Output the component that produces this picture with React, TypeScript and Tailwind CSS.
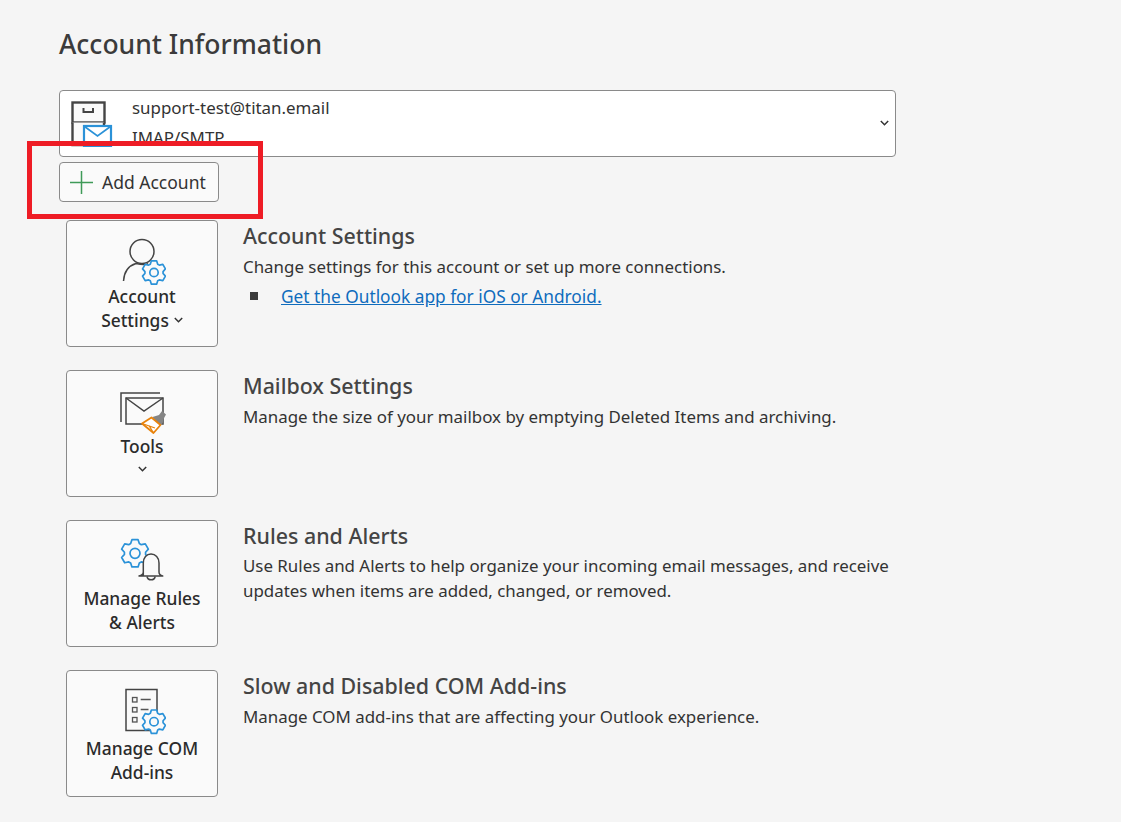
import React from "react";

const Chevron = () => (
  <svg width="9" height="6" viewBox="0 0 9 6" fill="none" stroke="#333" strokeWidth="1.5">
    <path d="M0.8 1 L4.5 4.7 L8.2 1" />
  </svg>
);

const Gear = ({ cx, cy, R = 12, hub = 4 }: { cx: number; cy: number; R?: number; hub?: number }) => {
  const r = R * 0.76;
  let d = "";
  for (let i = 0; i < 6; i++) {
    const a = (i * Math.PI) / 3 - Math.PI / 2;
    const pts: [number, number][] = [
      [r, a - 0.42],
      [R, a - 0.22],
      [R, a + 0.22],
      [r, a + 0.42],
    ];
    pts.forEach(([rad, ang], j) => {
      const x = cx + rad * Math.cos(ang);
      const y = cy + rad * Math.sin(ang);
      d += (i === 0 && j === 0 ? "M" : "L") + x.toFixed(2) + " " + y.toFixed(2) + " ";
    });
  }
  d += "Z";
  return (
    <g fill="#fafafa" stroke="#2b92d8" strokeWidth="1.7" strokeLinejoin="round">
      <path d={d} />
      <circle cx={cx} cy={cy} r={hub} />
    </g>
  );
};

const PersonIcon = () => (
  <svg width="48" height="48" viewBox="0 0 48 48" fill="none">
    <circle cx="24" cy="14.5" r="12" fill="#fafafa" stroke="#444" strokeWidth="1.5" />
    <path d="M5.5 44 C6 36 10 29 18 26.5 C24 28 28 28 30 26.5" fill="#fafafa" stroke="#444" strokeWidth="1.5" />
    <Gear cx={36} cy={35.5} hub={4.2} />
  </svg>
);

const ToolsIcon = () => (
  <svg width="48" height="48" viewBox="0 0 48 48" fill="none">
    <path d="M3 35 V6 H42" stroke="#444" strokeWidth="1.5" />
    <rect x="8" y="11" width="37" height="26" fill="#fafafa" stroke="#444" strokeWidth="1.5" />
    <path d="M8 11 L26 24 L45 11" stroke="#444" strokeWidth="1.5" />
    <path d="M34.5 30 L41 28 L44 24 L48 27.5 L45.5 32 L44 38 L40 38 Z" fill="#858585" />
    <path d="M24 36.5 L33.5 30.5 L42.5 38 L35.5 46 Z" fill="#fff" stroke="#e8830c" strokeWidth="1.8" strokeLinejoin="round" />
    <path d="M24 36.5 L37 41 M31 38.5 L35.5 46" stroke="#e8830c" strokeWidth="1.3" />
  </svg>
);

const RulesIcon = () => (
  <svg width="48" height="48" viewBox="0 0 48 48" fill="none">
    <Gear cx={17} cy={16.3} R={14} hub={5} />
    <path
      d="M25.3 39 V26 C25.3 20.5 28.5 17 33 17 C37.5 17 41 20.5 41 26 V35 C41 37 42.5 38.5 44.7 39 H21 C23.5 38.5 25.3 37 25.3 35 Z"
      fill="#fafafa"
      stroke="#444"
      strokeWidth="1.5"
      strokeLinejoin="round"
    />
    <path d="M29 39.5 A4.2 4.2 0 0 0 37.2 39.5" stroke="#444" strokeWidth="1.5" />
  </svg>
);

const AddinsIcon = () => (
  <svg width="48" height="48" viewBox="0 0 48 48" fill="none">
    <rect x="8" y="2.5" width="31" height="41" fill="#fafafa" stroke="#444" strokeWidth="1.5" />
    <g stroke="#555" strokeWidth="1.3">
      <rect x="14.5" y="10.5" width="4.5" height="4.5" />
      <rect x="14.5" y="20.5" width="4.5" height="4.5" />
      <rect x="14.5" y="30.5" width="4.5" height="4.5" />
      <path d="M22.7 12.5 H32.7 M22.7 22.5 H30.5" />
    </g>
    <Gear cx={36} cy={34.7} hub={4.2} />
  </svg>
);

const MailboxIcon = () => (
  <svg width="42" height="46" viewBox="0 0 42 46" fill="none">
    <rect x="1.5" y="1.5" width="32" height="20" fill="#fafafa" stroke="#444" strokeWidth="2.4" />
    <path d="M1.5 21.5 V44 H33 V21.5" fill="#fafafa" stroke="#444" strokeWidth="2.4" />
    <path d="M12.5 7 V11 H22 V7" stroke="#444" strokeWidth="2" />
    <rect x="13" y="25" width="27" height="20" fill="#fff" stroke="#2b92d8" strokeWidth="2.2" />
    <path d="M13.5 25.5 L26.5 35 L39.5 25.5" stroke="#2b92d8" strokeWidth="1.7" />
  </svg>
);

type Row = {
  icon: React.ReactNode;
  label: React.ReactNode;
  labelClass: string;
  title: string;
  body: React.ReactNode;
};

const rows: Row[] = [
  {
    icon: <PersonIcon />,
    labelClass: "-mt-[1px]",
    label: (
      <>
        Account
        <br />
        <span className="inline-flex items-center gap-[5px]">
          Settings <Chevron />
        </span>
      </>
    ),
    title: "Account Settings",
    body: (
      <>
        <p className="leading-[24px]">Change settings for this account or set up more connections.</p>
        <div className="mt-[6px] flex items-center">
          <span className="mb-[2px] ml-[7px] h-[8px] w-[8px] bg-[#3a3a3a]" />
          <a className="ml-[23px] text-[17.3px] leading-[24px] text-[#0f6cbd] underline" href="#">
            Get the Outlook app for iOS or Android.
          </a>
        </div>
      </>
    ),
  },
  {
    icon: <ToolsIcon />,
    labelClass: "-mt-[1px]",
    label: (
      <>
        Tools
        <div className="flex h-[22px] items-center justify-center">
          <Chevron />
        </div>
      </>
    ),
    title: "Mailbox Settings",
    body: <p className="leading-[24px]">Manage the size of your mailbox by emptying Deleted Items and archiving.</p>,
  },
  {
    icon: <RulesIcon />,
    labelClass: "mt-[1px]",
    label: (
      <>
        Manage Rules
        <br />& Alerts
      </>
    ),
    title: "Rules and Alerts",
    body: (
      <p className="-mt-[2px] leading-[25px]">
        Use Rules and Alerts to help organize your incoming email messages, and receive
        <br />
        updates when items are added, changed, or removed.
      </p>
    ),
  },
  {
    icon: <AddinsIcon />,
    labelClass: "mt-[1px]",
    label: (
      <>
        Manage COM
        <br />
        Add-ins
      </>
    ),
    title: "Slow and Disabled COM Add-ins",
    body: <p className="leading-[24px]">Manage COM add-ins that are affecting your Outlook experience.</p>,
  },
];

export default function App() {
  return (
    <div className="relative h-[822px] w-[1121px] overflow-hidden bg-[#f5f5f5] font-['Noto_Sans','Open_Sans',sans-serif] text-[#3a3a3a]">
      <div className="pl-[59px] pt-[26px]">
        <h1 className="text-[26.5px] font-medium leading-[36px] text-[#3b3b3b]">Account Information</h1>
        <div className="mt-[28px] flex h-[67px] w-[837px] items-start overflow-hidden rounded-[4px] border border-[#8a8a8a] bg-white pl-[11px]">
          <div className="mt-[10px] shrink-0">
            <MailboxIcon />
          </div>
          <div className="ml-[19px] mt-[2px] flex-1 text-[16.9px] leading-[30px] text-[#333]">
            <div>support-test@titan.email</div>
            <div>IMAP/SMTP</div>
          </div>
          <div className="mr-[6px] mt-[29px]">
            <Chevron />
          </div>
        </div>
        <button className="mt-[5px] flex h-[40px] w-[160px] items-center rounded-[4px] border border-[#8a8a8a] bg-[#fafafa] pl-[10px] text-[17.5px] text-[#333]">
          <svg width="23" height="23" viewBox="0 0 23 23" fill="none" stroke="#3f9a58" strokeWidth="1.5">
            <path d="M11.5 0 V23 M0 11.5 H23" />
          </svg>
          <span className="ml-[9px]">Add Account</span>
        </button>
      </div>

      <div className="ml-[66px] mt-[18px] flex flex-col gap-[23px]">
        {rows.map((row) => (
          <div key={row.title} className="flex">
            <div className="flex h-[127px] w-[152px] shrink-0 flex-col items-center rounded-[4px] border border-[#8a8a8a] bg-[#fafafa] pt-[16px]">
              {row.icon}
              <div className={`${row.labelClass} text-center text-[17.4px] font-medium leading-[24px] text-[#2b2b2b]`}>
                {row.label}
              </div>
            </div>
            <div className="ml-[25px] text-[16.9px] text-[#333]">
              <h2 className="h-[35px] text-[21.4px] font-medium leading-[32px] text-[#444]">{row.title}</h2>
              {row.body}
            </div>
          </div>
        ))}
      </div>

      <div className="pointer-events-none absolute left-[27px] top-[141px] h-[78px] w-[236px] border-[5px] border-[#ee1c25]" />
    </div>
  );
}
